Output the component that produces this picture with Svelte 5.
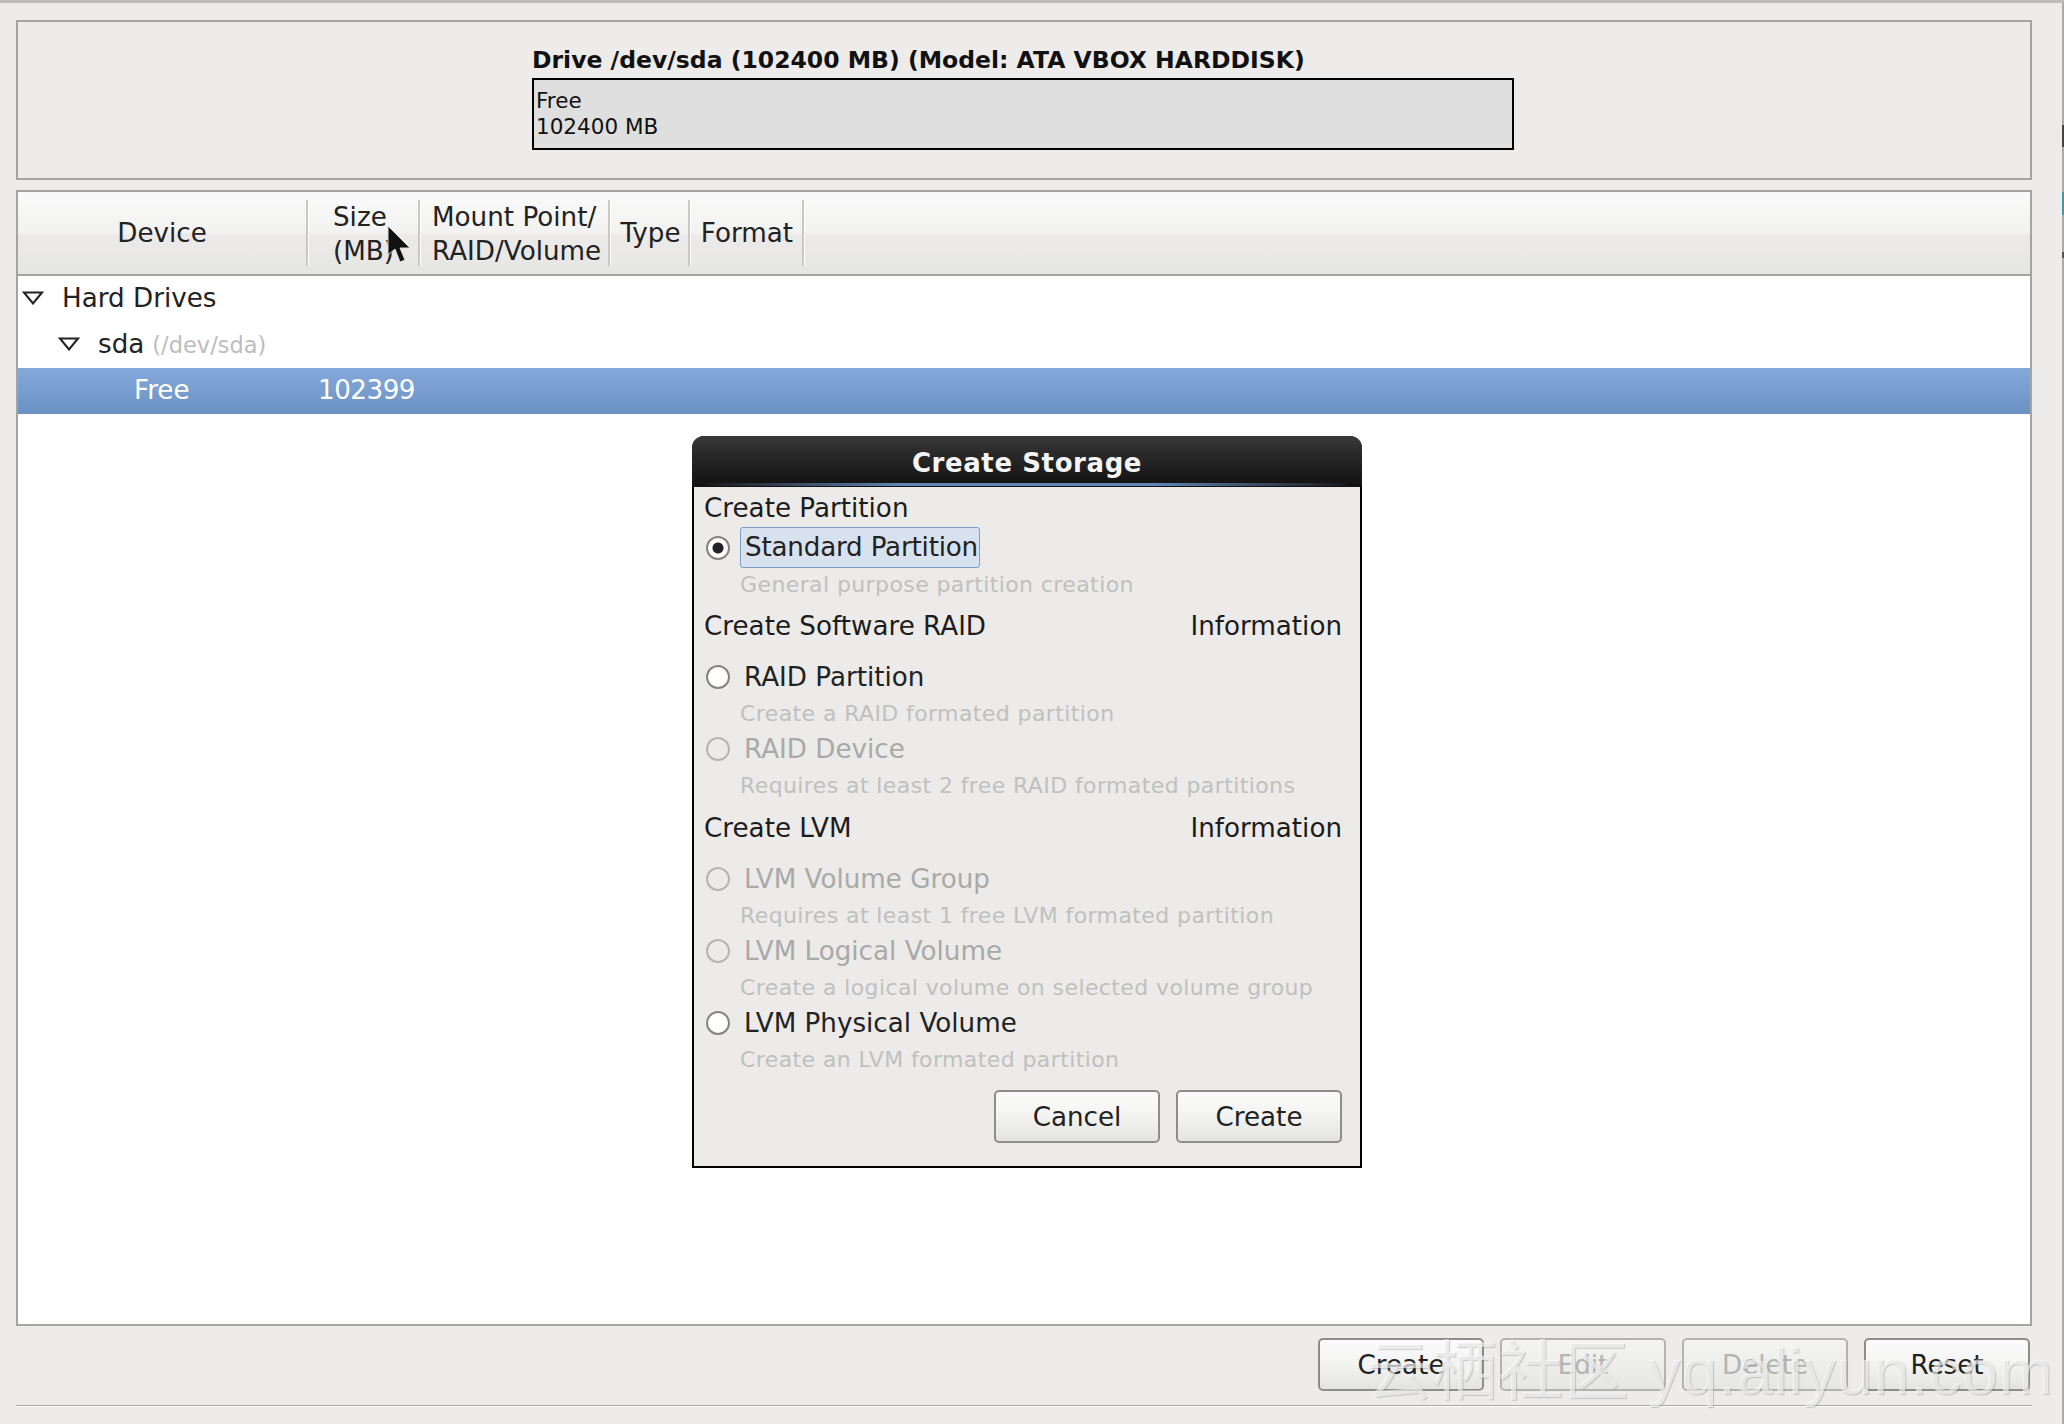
<script>
  const columns = [
    { name: 'col-device', lines: ['Device'] },
    { name: 'col-size', lines: ['Size', '(MB)'] },
    { name: 'col-mount', lines: ['Mount Point/', 'RAID/Volume'] },
    { name: 'col-type', lines: ['Type'] },
    { name: 'col-format', lines: ['Format'] }
  ];

  const raidOptions = [
    { label: 'RAID Partition', hint: 'Create a RAID formated partition', enabled: true },
    { label: 'RAID Device', hint: 'Requires at least 2 free RAID formated partitions', enabled: false }
  ];

  const lvmOptions = [
    { label: 'LVM Volume Group', hint: 'Requires at least 1 free LVM formated partition', enabled: false },
    { label: 'LVM Logical Volume', hint: 'Create a logical volume on selected volume group', enabled: false },
    { label: 'LVM Physical Volume', hint: 'Create an LVM formated partition', enabled: true }
  ];

  const actions = [
    { text: 'Create', enabled: true },
    { text: 'Edit', enabled: false },
    { text: 'Delete', enabled: false },
    { text: 'Reset', enabled: true }
  ];
</script>

{#snippet expander()}
  <svg class="expander" width="22" height="14" viewBox="0 0 22 14">
    <path d="M2 1.5 H20 L11 12.5 Z" fill="#fff" stroke="#222" stroke-width="2" />
  </svg>
{/snippet}

{#snippet option(item)}
  <div class="option">
    <div class="option-row" class:off={!item.enabled}>
      <span class="radio"></span>
      <span class="option-label">{item.label}</span>
    </div>
    <div class="hint">{item.hint}</div>
  </div>
{/snippet}

<div class="screen">
  <div class="window">
    <section class="drive-frame">
      <div class="drive">
        <h1>Drive /dev/sda (102400 MB) (Model: ATA VBOX HARDDISK)</h1>
        <div class="drive-bar">
          <span>Free</span>
          <span>102400 MB</span>
        </div>
      </div>
    </section>

    <section class="list-frame">
      <div class="list-head">
        {#each columns as col}
          <div class="col {col.name}">
            <div>
              {#each col.lines as line}
                <div class="col-line">{line}</div>
              {/each}
            </div>
          </div>
        {/each}
      </div>
      <div class="row row-drives">
        {@render expander()}
        <span>Hard Drives</span>
      </div>
      <div class="row row-sda">
        {@render expander()}
        <span>sda</span>
        <span class="dev">(/dev/sda)</span>
      </div>
      <div class="row row-free">
        <span class="free-name">Free</span>
        <span class="free-size">102399</span>
      </div>
    </section>

    <div class="actions">
      {#each actions as action}
        <button class="btn" class:disabled={!action.enabled}>{action.text}</button>
      {/each}
    </div>
    <div class="rule"></div>
  </div>

  <div class="edge"></div>

  <div class="dialog">
    <div class="dialog-title">Create Storage</div>
    <div class="dialog-body">
      <div class="heading first">Create Partition</div>
      <div class="option">
        <div class="option-row">
          <span class="radio checked"></span>
          <span class="option-label focused">Standard Partition</span>
        </div>
        <div class="hint">General purpose partition creation</div>
      </div>

      <div class="heading raid">
        <span>Create Software RAID</span>
        <span>Information</span>
      </div>
      {#each raidOptions as item}
        {@render option(item)}
      {/each}

      <div class="heading lvm">
        <span>Create LVM</span>
        <span>Information</span>
      </div>
      {#each lvmOptions as item}
        {@render option(item)}
      {/each}

      <div class="dialog-buttons">
        <button class="btn">Cancel</button>
        <button class="btn">Create</button>
      </div>
    </div>
  </div>

  <svg class="cursor" width="28" height="42" viewBox="0 0 28 42">
    <path d="M1 1 L1 30 L8 24 L13 37 L18 35 L13 23 L23 23 Z" fill="#111" stroke="#ddd" stroke-width="1" />
  </svg>

  <div class="watermark">云栖社区 yq.aliyun.com</div>
</div>

<style>
  :global(body) {
    margin: 0;
    background: #edeceb;
  }

  .screen {
    position: relative;
    display: flex;
    width: 2064px;
    height: 1424px;
    overflow: hidden;
    font-family: "DejaVu Sans", sans-serif;
    font-size: 26.2px;
    color: #222;
  }

  .window {
    width: 2062px;
    height: 1424px;
    box-sizing: border-box;
    padding: 20px 30px 0 16px;
    background: #edeceb;
    position: relative;
  }

  .window::before {
    content: '';
    position: absolute;
    top: 0;
    left: 0;
    right: 0;
    height: 3px;
    background: #bdbcb9;
  }

  .edge {
    width: 2px;
    height: 1424px;
    background: linear-gradient(#bbb 0 3px, #aaa 3px 125px, #444 125px 147px, #aaa 147px 192px, #3d98aa 192px 215px, #aaa 215px 252px, #555 252px 258px, #aaa 258px);
  }

  .drive-frame {
    box-sizing: border-box;
    height: 160px;
    border: 2px solid #a5a4a0;
    padding: 26px 0 0 514px;
  }

  .drive h1 {
    margin: 0 0 6px;
    height: 24px;
    font-size: 23.5px;
    line-height: 24px;
    font-weight: bold;
    color: #111;
    white-space: nowrap;
  }

  .drive-bar {
    display: flex;
    flex-direction: column;
    justify-content: center;
    box-sizing: border-box;
    width: 982px;
    height: 72px;
    padding-left: 2px;
    border: 2px solid #000;
    background: #dfdfdf;
    font-size: 21.5px;
    line-height: 26px;
    color: #111;
  }

  .list-frame {
    box-sizing: border-box;
    height: 1136px;
    margin-top: 10px;
    border: 2px solid #a5a4a0;
    background: #fff;
  }

  .list-head {
    display: flex;
    box-sizing: border-box;
    height: 84px;
    padding: 8px 0;
    border-bottom: 2px solid #a5a4a0;
    background: linear-gradient(#fafafa, #f2f2f1 50%, #ecebea 52%, #e6e6e4);
  }

  .col {
    display: flex;
    align-items: center;
    box-sizing: border-box;
    border-right: 2px solid #c9c8c4;
    box-shadow: 1px 0 0 #fff;
    line-height: 34px;
  }

  .col-line {
    white-space: nowrap;
  }

  .col-device { width: 290px; justify-content: center; }
  .col-size { width: 112px; padding: 2px 0 0 25px; }
  .col-mount { width: 190px; padding: 2px 0 0 12px; }
  .col-type { width: 80px; padding-left: 3px; justify-content: center; }
  .col-format { width: 114px; padding-left: 2px; justify-content: center; }

  .row {
    display: flex;
    align-items: center;
    box-sizing: border-box;
    height: 46px;
    padding-bottom: 3px;
    white-space: nowrap;
  }

  .row-drives {
    padding-left: 4px;
    gap: 18px;
  }

  .row-sda {
    padding-left: 40px;
    gap: 18px;
  }

  .row-sda .dev {
    margin-left: -10px;
    font-size: 22.5px;
    color: #bdbdbd;
    padding-top: 3px;
  }

  .row-free {
    padding-left: 116px;
    background: linear-gradient(#86a9da, #6a92c5);
    color: #fff;
  }

  .free-name {
    width: 184px;
  }

  .free-size {
    letter-spacing: -0.5px;
  }

  .expander {
    flex: none;
  }

  .actions {
    display: flex;
    justify-content: flex-end;
    gap: 16px;
    margin-top: 12px;
    padding-right: 2px;
  }

  .btn {
    box-sizing: border-box;
    width: 166px;
    height: 53px;
    padding: 0;
    border: 2px solid #8f8d88;
    border-radius: 5px;
    background: linear-gradient(#fcfcfc, #f3f3f2 50%, #e3e3e1);
    font-family: inherit;
    font-size: 26.2px;
    color: #222;
  }

  .disabled {
    border-color: #b5b3af;
    background: linear-gradient(#f4f4f3, #e6e6e5);
    color: #b4b4b2;
  }

  .rule {
    height: 1px;
    margin-top: 14px;
    background: #a9a8a4;
    box-shadow: 0 1px 0 #fff;
  }

  .dialog {
    position: absolute;
    left: 692px;
    top: 436px;
    width: 670px;
    box-sizing: border-box;
    height: 732px;
    border: 2px solid #000;
    border-radius: 12px 12px 0 0;
    background: #ecebe9;
  }

  .dialog-title {
    position: relative;
    margin: -2px -2px 0;
    height: 51px;
    border-radius: 12px 12px 0 0;
    background: linear-gradient(#3a3a3a, #2b2b2b 30%, #111);
    font-size: 26px;
    line-height: 54px;
    font-weight: bold;
    letter-spacing: 0.6px;
    text-align: center;
    color: #f4f4f4;
  }

  .dialog-title::after {
    content: '';
    position: absolute;
    left: 16px;
    right: 16px;
    bottom: 1px;
    height: 3px;
    background: linear-gradient(90deg, #1a1a1a, #5f85b5 30%, #5f85b5 70%, #1a1a1a);
  }

  .dialog-body {
    padding: 0 18px 0 10px;
  }

  .heading {
    display: flex;
    justify-content: space-between;
    align-items: center;
    white-space: nowrap;
    color: #1c1c1c;
  }

  .heading.first { height: 40px; padding-top: 2px; box-sizing: border-box; }
  .heading.raid { height: 53px; margin-bottom: 4px; }
  .heading.lvm { height: 56px; margin-bottom: 2px; }

  .option {
    height: 72px;
  }

  .option-row {
    display: flex;
    align-items: center;
    height: 40px;
    padding: 1px 0 0 2px;
    box-sizing: border-box;
    white-space: nowrap;
  }

  .option-row.off {
    color: #a9a9a7;
  }

  .radio {
    flex: none;
    box-sizing: border-box;
    width: 24px;
    height: 24px;
    margin-right: 14px;
    border: 2px solid #85847f;
    border-radius: 50%;
    background: #fff;
  }

  .option-row.off .radio {
    border-color: #b5b4b0;
    background: transparent;
  }

  .radio.checked {
    background: radial-gradient(circle, #222 0 5px, #fff 6px);
  }

  .option-label {
    box-sizing: border-box;
    line-height: 36px;
  }

  .focused {
    height: 41px;
    margin-left: -4px;
    padding: 0 1px 0 4px;
    border: 1px solid #7e9dc4;
    border-radius: 3px;
    background: #d8e1ee;
    line-height: 38px;
    letter-spacing: -0.2px;
  }

  .hint {
    height: 32px;
    padding: 4px 0 0 36px;
    box-sizing: border-box;
    font-size: 22px;
    line-height: 28px;
    letter-spacing: 0.4px;
    white-space: nowrap;
    color: #c0c0be;
  }

  .dialog-buttons {
    display: flex;
    justify-content: flex-end;
    gap: 16px;
    margin-top: 16px;
  }

  .cursor {
    position: absolute;
    left: 387px;
    top: 225px;
  }

  .watermark {
    position: absolute;
    left: 1367px;
    top: 1332px;
    font-family: "Liberation Sans", "Noto Sans CJK SC", sans-serif;
    font-size: 65px;
    line-height: 80px;
    letter-spacing: 0.6px;
    white-space: nowrap;
    color: rgba(255, 255, 255, 0.6);
    text-shadow: 1px 1px 1px rgba(120, 120, 120, 0.35);
  }
</style>
